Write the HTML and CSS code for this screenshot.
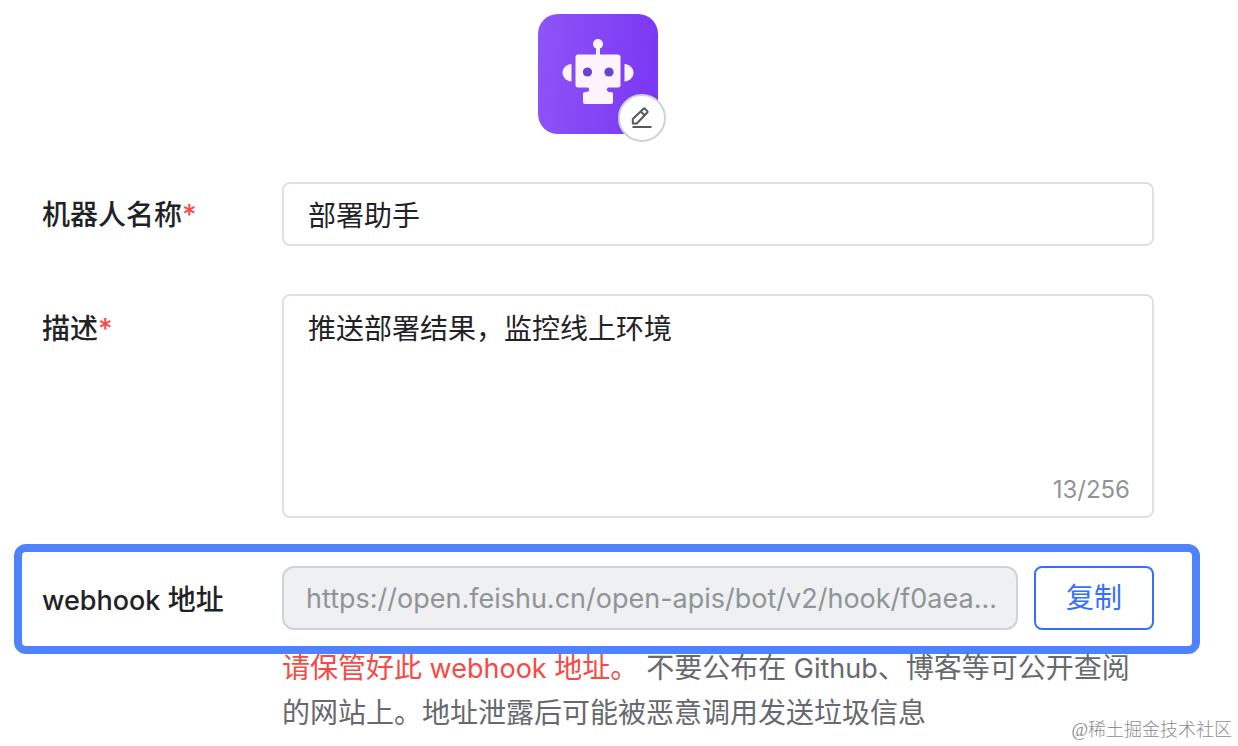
FILE: index.html
```
<!DOCTYPE html>
<html lang="zh-CN">
<head>
<meta charset="utf-8">
<meta name="viewport" content="width=device-width, initial-scale=1">
<title>机器人设置</title>
<link rel="stylesheet" href="styles.css">
</head>
<body>
<main class="page">
  <form class="form">
    <div class="row-avatar">
      <div class="avatar">
        <svg class="avatar-picture" viewBox="0 0 120 120" role="img" aria-label="机器人头像">
          <defs>
            <linearGradient id="avatar-bg" x1="0" y1="0.2" x2="1" y2="0.3">
              <stop offset="0" stop-color="#8d54f7"/>
              <stop offset="1" stop-color="#7b38f3"/>
            </linearGradient>
          </defs>
          <rect width="120" height="120" rx="20" fill="url(#avatar-bg)"/>
          <g fill="#fdf3fd">
            <circle cx="60" cy="30" r="5"/>
            <rect x="58" y="32" width="4" height="10"/>
            <path d="M40 40.500H80A2.500 2.500 0 0 1 82.500 43V71A2.500 2.500 0 0 1 80 73.500H70Q67 76 71 78H73Q75 78 75 80V88Q75 90 73 90H47Q45 90 45 88V80Q45 78 47 78H49Q53 76 50 73.500H40A2.500 2.500 0 0 1 37.500 71V43A2.500 2.500 0 0 1 40 40.500Z"/>
            <path d="M33.500 50V67.500C28 67 24.500 63 24.500 58.700S28 50.500 33.500 50Z"/>
            <path d="M86.500 50V67.500C92 67 95.500 63 95.500 58.700S92 50.500 86.500 50Z"/>
          </g>
          <g fill="#6a43cc">
            <circle cx="49.500" cy="58" r="4.600"/>
            <circle cx="71" cy="58" r="4.600"/>
          </g>
        </svg>
        <button class="avatar-edit" type="button" aria-label="编辑头像">
          <svg class="avatar-edit-icon" viewBox="0 0 24 24" fill="none" stroke="#55585c" stroke-width="2" stroke-linejoin="round">
            <path d="M2.800 17.500V13L13.500 2.700Q14.200 2 14.900 2.700L17.300 5.100Q18 5.800 17.300 6.500L6.800 17.500Z"/>
            <path d="M10.800 5.500L14.600 9.300"/>
            <path d="M2.500 21H21.500"/>
          </svg>
        </button>
      </div>
    </div>

    <div class="row">
      <label class="label" for="bot-name">机器人名称<span class="required">*</span></label>
      <input class="field" id="bot-name" type="text" value="部署助手" required>
    </div>

    <div class="row row-description">
      <label class="label" for="bot-description">描述<span class="required">*</span></label>
      <div class="area">
        <textarea class="area-input" id="bot-description" maxlength="256" required>推送部署结果，监控线上环境</textarea>
        <span class="counter">13/256</span>
      </div>
    </div>

    <div class="row row-webhook">
      <label class="label" for="webhook-url"><span class="latin">webhook </span>地址</label>
      <div class="copy-group">
        <input class="field field-readonly" id="webhook-url" type="text" value="https://open.feishu.cn/open-apis/bot/v2/hook/f0aea..." readonly>
        <button class="copy-button" type="button">复制</button>
      </div>
    </div>

    <p class="hint"><span class="hint-warning">请保管好此<span class="latin"> webhook </span>地址。</span> 不要公布在<span class="latin"> Github</span>、博客等可公开查阅的网站上。地址泄露后可能被恶意调用发送垃圾信息</p>
  </form>
  <span class="watermark">@稀土掘金技术社区</span>
</main>
</body>
</html>
```
FILE: styles.css
```
* {
  box-sizing: border-box;
}

body {
  margin: 0;
  background: #fff;
  color: #1f2326;
  font-family: Inter, "Noto Sans CJK SC", sans-serif;
  font-size: 28px;
  line-height: 44px;
}

input,
textarea,
button {
  font: inherit;
  color: inherit;
}

.page {
  position: relative;
  min-height: 100vh;
  padding: 14px 38px 10px 14px;
}

.row-avatar {
  display: flex;
  justify-content: center;
  padding: 0 46px 0 28px;
  margin-bottom: 48px;
}

.avatar {
  position: relative;
  width: 120px;
  height: 120px;
}

.avatar-picture {
  display: block;
  width: 100%;
}

.avatar-edit {
  position: absolute;
  right: -8px;
  bottom: -8px;
  display: grid;
  place-items: center;
  width: 48px;
  height: 48px;
  padding: 0;
  border: 2px solid #d0d3d6;
  border-radius: 50%;
  background: #fff;
}

.avatar-edit-icon {
  width: 24px;
  height: 24px;
}

.row {
  display: grid;
  grid-template-columns: 240px minmax(0, 1fr);
  align-items: center;
  padding: 0 46px 0 28px;
  margin-bottom: 48px;
}

.label {
  padding-top: 2px;
  font-weight: 500;
}

.required {
  color: #f54a45;
}

.field {
  width: 100%;
  min-width: 0;
  height: 64px;
  padding: 0 24px;
  border: 2px solid #dee0e3;
  border-radius: 8px;
  background: #fff;
}

.row-description {
  align-items: start;
  margin-bottom: 26px;
}

.row-description .label {
  padding-top: 13px;
}

.area {
  display: flex;
  flex-direction: column;
  height: 224px;
  padding: 11px 22px 4px 24px;
  border: 2px solid #dee0e3;
  border-radius: 8px;
}

.area-input {
  flex: 1;
  width: 100%;
  padding: 0;
  border: 0;
  background: transparent;
  resize: none;
  outline: 0;
}

.counter {
  align-self: flex-end;
  color: #8f9499;
  font-size: 24px;
}

.row-webhook {
  padding: 14px 38px 16px 20px;
  margin-bottom: 0;
  border: 8px solid #4e83fd;
  border-radius: 12px;
}

.row-webhook .label {
  padding-top: 4px;
}

.copy-group {
  display: flex;
  gap: 16px;
}

.field-readonly {
  flex: 1;
  padding: 0 16px 0 22px;
  border-color: #d0d3d6;
  border-radius: 12px;
  background: #eff0f1;
  color: #8f9499;
  font-size: 27px;
}

.copy-button {
  width: 120px;
  height: 64px;
  padding: 0;
  border: 2px solid #3370ff;
  border-radius: 8px;
  background: #fff;
  color: #3370ff;
}

.hint {
  margin: -8px 46px 0 268px;
  color: #66696e;
}

.hint-warning {
  color: #f54a45;
}

.latin {
  font-size: 27px;
}

.watermark {
  position: absolute;
  right: 6px;
  bottom: 4px;
  color: #8c8c8c;
  font-family: "Liberation Serif", "Noto Sans CJK SC", serif;
  font-size: 18px;
  font-weight: 300;
  line-height: 24px;
}
```
